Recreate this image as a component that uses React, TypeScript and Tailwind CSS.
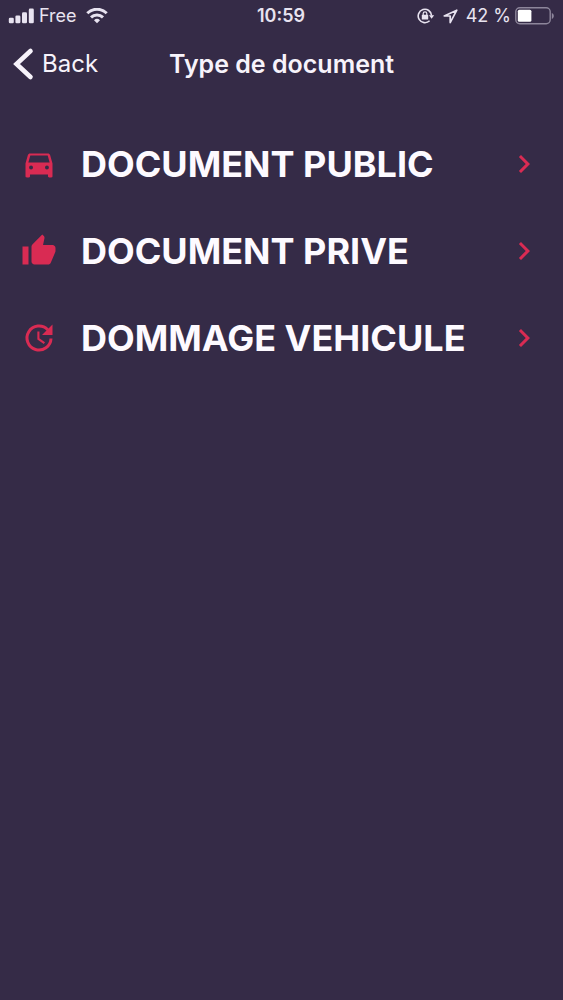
import type { ComponentType } from "react"
import { MdChevronRight, MdThumbUp } from "react-icons/md"

function CarIcon({ className }: { className?: string }) {
  return (
    <svg viewBox="0 0 24 24" fill="currentColor" fillRule="evenodd" className={className}>
      <path d="M19.4 6C19.2 5.4 18.6 5 18 5H6C5.4 5 4.8 5.4 4.6 6L3 11.6v8.6c0 .5.4.8.8.8h1.4c.5 0 .8-.3.8-.8V19h12v1.2c0 .5.3.8.8.8h1.4c.4 0 .8-.3.8-.8v-8.6zM6.7 15.6a1.3 1.3 0 1 1 0-2.6 1.3 1.3 0 0 1 0 2.6zm10.6 0a1.3 1.3 0 1 1 0-2.6 1.3 1.3 0 0 1 0 2.6zM4.9 11l1.3-4.7h11.6L19.1 11z" />
    </svg>
  )
}

function UpdateIcon({ className }: { className?: string }) {
  return (
    <svg viewBox="0 0 24 24" fill="none" stroke="currentColor" className={className}>
      <path d="M20 12.3A8 8 0 1 1 17.8 6.5" strokeWidth="2" />
      <path d="M21 3v7h-7z" fill="currentColor" stroke="none" />
      <path d="M11.6 7.6v5l4 2.8" strokeWidth="1.4" />
    </svg>
  )
}

const documentTypes: { label: string; icon: ComponentType<{ className?: string }> }[] = [
  { label: "DOCUMENT PUBLIC", icon: CarIcon },
  { label: "DOCUMENT PRIVE", icon: MdThumbUp },
  { label: "DOMMAGE VEHICULE", icon: UpdateIcon },
]

function SignalIcon() {
  return (
    <svg width="26" height="16" viewBox="0 0 26 16" fill="currentColor">
      <rect x="0.8" y="9.8" width="5" height="5.4" rx="1.3" />
      <rect x="7.4" y="7.4" width="5" height="7.8" rx="1.3" />
      <rect x="14" y="4.2" width="5" height="11" rx="1.3" />
      <rect x="20.8" y="0.6" width="5" height="14.6" rx="1.3" />
    </svg>
  )
}

function WifiIcon() {
  return (
    <svg width="22" height="16" viewBox="0 0 22 16" fill="none" stroke="currentColor" strokeWidth="3">
      <path d="M1.3 5.2a13.9 13.9 0 0 1 19.4 0" />
      <path d="M5 9.4a8.6 8.6 0 0 1 12 0" />
      <path d="M11 15.2l-3-3a4.3 4.3 0 0 1 6 0z" fill="currentColor" stroke="none" />
    </svg>
  )
}

function RotationLockIcon() {
  return (
    <svg width="18" height="16" viewBox="0 0 18 16" fill="none" stroke="currentColor" strokeWidth="1.6">
      <path d="M14.6 7.6A6.7 6.7 0 1 0 12.6 12.8" />
      <path d="M12 7.2h5.2l-2.6 3.6z" fill="currentColor" stroke="none" />
      <rect x="4.8" y="6.8" width="6.4" height="4.8" rx="0.6" fill="currentColor" stroke="none" />
      <path d="M6.2 7.4V5.6a1.8 1.8 0 0 1 3.6 0v1.8" strokeWidth="1.2" />
    </svg>
  )
}

function LocationIcon() {
  return (
    <svg width="15" height="15" viewBox="0 0 15 15" fill="none" stroke="currentColor" strokeWidth="1.7" strokeLinejoin="round">
      <path d="M13.8 1.2L1.2 7h6v6.6z" />
    </svg>
  )
}

function BatteryIcon() {
  return (
    <svg width="39" height="18" viewBox="0 0 39 18">
      <rect x="0.8" y="0.8" width="34.4" height="16" rx="4" fill="none" stroke="#8d869b" strokeWidth="1.4" />
      <rect x="2.8" y="2.8" width="13.6" height="12" rx="1.5" fill="white" />
      <path d="M36.8 6v6c1.2-.4 2-1.6 2-3s-.8-2.6-2-3z" fill="#8d869b" />
    </svg>
  )
}

function StatusBar() {
  return (
    <div className="grid h-8 grid-cols-[1fr_auto_1fr] items-center pr-[9px] pl-2 text-lg text-[#e8e3f0]">
      <div className="flex items-center gap-[5px]">
        <SignalIcon />
        <span className="mr-1">Free</span>
        <WifiIcon />
      </div>
      <span className="font-semibold">10:59</span>
      <div className="flex items-center justify-end">
        <RotationLockIcon />
        <span className="mx-2">
          <LocationIcon />
        </span>
        <span className="mr-1 whitespace-nowrap">42 %</span>
        <BatteryIcon />
      </div>
    </div>
  )
}

function Header() {
  return (
    <header className="grid h-16 grid-cols-[1fr_auto_1fr] items-center px-3 text-[#f7f3fb]">
      <button type="button" className="flex items-center gap-2 text-2xl">
        <svg width="22" height="34" viewBox="0 0 22 34" fill="none" stroke="currentColor" strokeWidth="4.6" strokeLinecap="round">
          <path d="M18.5 4L4.5 17l14 13" />
        </svg>
        Back
      </button>
      <h1 className="text-[25px] leading-8 font-semibold">Type de document</h1>
    </header>
  )
}

export default function App() {
  return (
    <div className="min-h-screen bg-[#352b47] font-['Inter',sans-serif]">
      <StatusBar />
      <Header />
      <main className="pt-6">
        <ul>
          {documentTypes.map(({ label, icon: Icon }) => (
            <li key={label}>
              <button type="button" className="flex h-[87px] w-full items-center px-[21px] text-left">
                <Icon className="size-9 shrink-0 text-[#d92b53]" />
                <span className="ml-6 flex-1 text-4xl font-bold text-[#fdfaff]">{label}</span>
                <MdChevronRight className="size-9 shrink-0 text-[#d92b53]" />
              </button>
            </li>
          ))}
        </ul>
      </main>
    </div>
  )
}
